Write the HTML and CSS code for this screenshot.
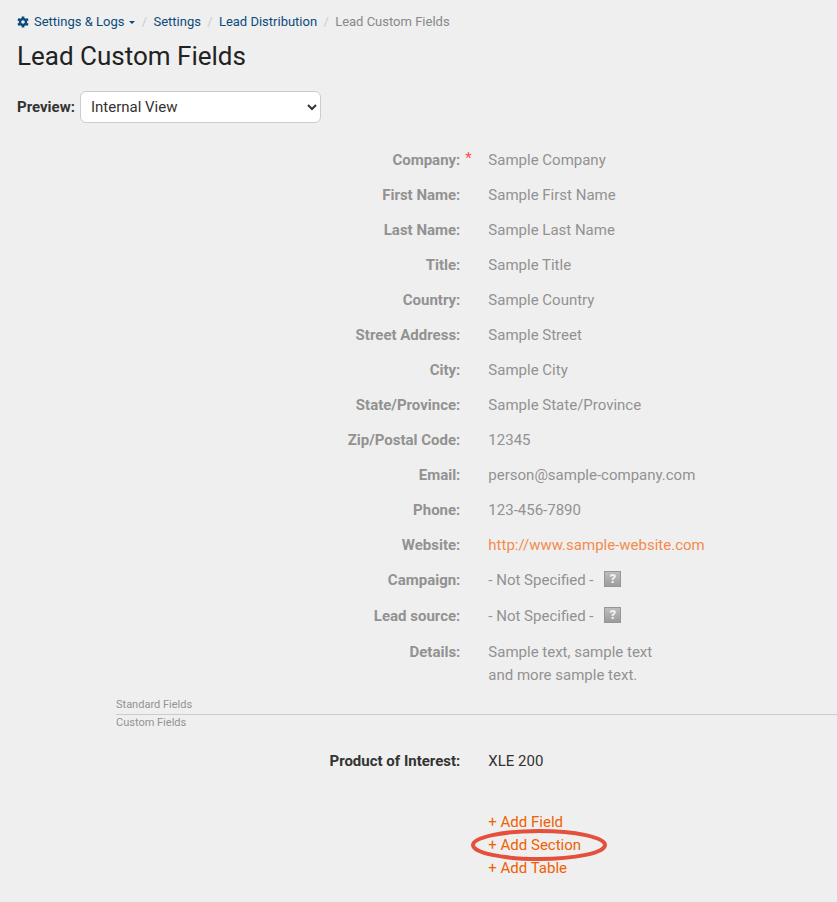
FILE: index.html
```html
<!DOCTYPE html>
<html lang="en">
<head>
    <meta charset="UTF-8">
    <meta name="viewport" content="width=device-width, initial-scale=1.0">
    <title>Lead Custom Fields</title>
    <link rel="stylesheet" href="styles.css">
</head>
<body>
    <header class="page-header">
        <nav class="breadcrumb" aria-label="Breadcrumb">
            <a class="menu-link" href="#">
                <svg class="gear" viewBox="0 0 12 12" aria-hidden="true">
                    <g fill="none" stroke="currentColor">
                        <circle cx="6" cy="6" r="3" stroke-width="2.4"/>
                        <path stroke-width="2.6" d="M6 .4v2M6 9.6v2M1 3.1l1.9 1.1M9.1 7.8l1.9 1.1M1 8.9l1.9-1.1M9.1 4.2l1.9-1.1"/>
                    </g>
                </svg>
                Settings &amp; Logs
                <span class="caret"></span>
            </a>
            <span class="slash">/</span>
            <a href="#">Settings</a>
            <span class="slash">/</span>
            <a href="#">Lead Distribution</a>
            <span class="slash">/</span>
            <span class="current">Lead Custom Fields</span>
        </nav>
        <h1>Lead Custom Fields</h1>
        <div class="preview">
            <label for="previewMode">Preview:</label>
            <select id="previewMode">
                <option>Internal View</option>
            </select>
        </div>
    </header>

    <main>
        <dl class="fields standard">
            <div class="row"><dt>Company:</dt><dd><span class="required">*</span>Sample Company</dd></div>
            <div class="row"><dt>First Name:</dt><dd>Sample First Name</dd></div>
            <div class="row"><dt>Last Name:</dt><dd>Sample Last Name</dd></div>
            <div class="row"><dt>Title:</dt><dd>Sample Title</dd></div>
            <div class="row"><dt>Country:</dt><dd>Sample Country</dd></div>
            <div class="row"><dt>Street Address:</dt><dd>Sample Street</dd></div>
            <div class="row"><dt>City:</dt><dd>Sample City</dd></div>
            <div class="row"><dt>State/Province:</dt><dd>Sample State/Province</dd></div>
            <div class="row"><dt>Zip/Postal Code:</dt><dd>12345</dd></div>
            <div class="row"><dt>Email:</dt><dd>person@sample-company.com</dd></div>
            <div class="row"><dt>Phone:</dt><dd>123-456-7890</dd></div>
            <div class="row"><dt>Website:</dt><dd><a href="#">http://www.sample-website.com</a></dd></div>
            <div class="row with-help"><dt>Campaign:</dt><dd>- Not Specified - <button class="help" type="button">?</button></dd></div>
            <div class="row with-help"><dt>Lead source:</dt><dd>- Not Specified - <button class="help" type="button">?</button></dd></div>
            <div class="row"><dt>Details:</dt><dd>Sample text, sample text<br>and more sample text.</dd></div>
        </dl>

        <div class="divider">
            <div class="divider-top">Standard Fields</div>
            <div class="divider-bottom">Custom Fields</div>
        </div>

        <dl class="fields custom">
            <div class="row"><dt>Product of Interest:</dt><dd>XLE 200</dd></div>
        </dl>

        <ul class="actions">
            <li><a href="#">+ Add Field</a></li>
            <li>
                <a class="marked" href="#">+ Add Section
                    <svg class="marker" viewBox="0 0 136 32" aria-hidden="true">
                        <ellipse cx="68" cy="16" rx="66" ry="14" fill="none" stroke="#e4503c" stroke-width="4"/>
                    </svg>
                </a>
            </li>
            <li><a href="#">+ Add Table</a></li>
        </ul>
    </main>
</body>
</html>
```

FILE: styles.css
```css
* {
    box-sizing: border-box;
}

body {
    margin: 0;
    background-color: #efefef;
    color: #333;
    font-family: Roboto, sans-serif;
    font-size: 15px;
    line-height: 23px;
}

a {
    color: #f06000;
    text-decoration: none;
}

.page-header {
    padding: 12px 17px 0;
}

.breadcrumb {
    display: flex;
    align-items: center;
    font-size: 13px;
    line-height: 20px;
}

.breadcrumb a {
    color: #0b4a7b;
}

.menu-link {
    display: flex;
    align-items: center;
    gap: 5px;
}

.gear {
    width: 12px;
    height: 12px;
}

.caret {
    border: 3px solid transparent;
    border-top-color: #0b4a7b;
    border-bottom: 0;
}

.slash {
    width: 18px;
    text-align: center;
    color: #ccc;
}

.current {
    color: #888;
}

h1 {
    margin: 8px 0 19px;
    color: #222;
    font-size: 26px;
    font-weight: 400;
    line-height: 32px;
}

.preview {
    display: flex;
    align-items: center;
    gap: 5px;
}

.preview label {
    font-weight: 700;
}

.preview select {
    width: 241px;
    height: 32px;
    padding: 0 6px;
    border: 1px solid #ccc;
    border-radius: 6px;
    background-color: #fff;
    color: #333;
    font-family: inherit;
    font-size: 15px;
}

.fields {
    margin: 0;
}

.standard {
    margin-top: 26px;
    color: #929292;
}

.standard a {
    color: #f28c4e;
}

.row,
.actions {
    display: grid;
    grid-template-columns: 55% 1fr;
    column-gap: 28px;
}

.row {
    padding-bottom: 12px;
}

.with-help {
    padding-bottom: 13px;
}

.standard .row:last-child {
    padding-bottom: 10px;
}

dt {
    font-weight: 700;
    text-align: right;
}

dd {
    position: relative;
    margin: 0;
}

.required {
    position: absolute;
    top: -2px;
    left: -23px;
    color: #ff4d4d;
}

.help {
    width: 17px;
    height: 16px;
    margin-left: 7px;
    padding: 0;
    border: 1px solid #969696;
    background: linear-gradient(#bdbdbd, #9c9c9c);
    color: #f0f0f0;
    font-family: inherit;
    font-size: 13px;
    font-weight: 900;
    line-height: 14px;
    vertical-align: 2px;
}

.divider {
    margin-left: 116px;
    color: #929292;
    font-size: 11px;
    line-height: 16px;
}

.divider-top {
    padding-bottom: 1px;
    border-bottom: 1px solid #ccc;
}

.custom {
    margin-top: 19px;
}

.actions {
    margin: 26px 0 0;
    padding: 0;
    list-style: none;
}

.actions li {
    grid-column: 2;
}

.marked {
    position: relative;
}

.marker {
    position: absolute;
    top: -7px;
    left: -17px;
    width: 136px;
    height: 32px;
}
```
